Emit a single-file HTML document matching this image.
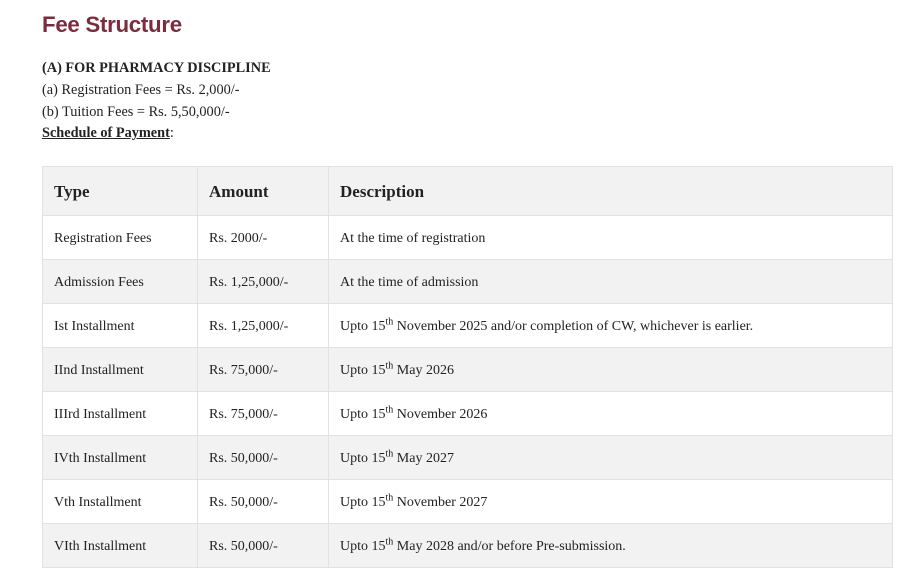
<!DOCTYPE html>
<html><head><style>
body{margin:0;background:#fff;width:900px;height:557px;overflow:hidden;font-family:"Liberation Serif",serif;color:#222;}
h1{position:absolute;left:42px;top:12px;margin:0;font:600 22.3px "Liberation Sans",sans-serif;color:#7a2d3f;letter-spacing:-0.3px}
.p{position:absolute;left:42px;top:58px;font-size:14.3px;line-height:21.8px}
table{position:absolute;left:42px;top:166px;width:851px;border-collapse:collapse;font-size:14px}
td,th{border:1px solid #e2e2e2;text-align:left;padding:2px 11px 0;height:41px}
th{height:46px;font-size:17px;font-weight:bold;background:#f2f2f2}
tr:nth-child(odd) td{background:#f2f2f2}
sup{font-size:10px;line-height:0}
</style></head><body>
<h1>Fee Structure</h1>
<div class="p"><b>(A) FOR PHARMACY DISCIPLINE</b><br>(a) Registration Fees = Rs. 2,000/-<br>(b) Tuition Fees = Rs. 5,50,000/-<br><b><u>Schedule of Payment</u></b>:</div>
<table>
<tr><th style="width:132px">Type</th><th style="width:108px">Amount</th><th>Description</th></tr>
<tr><td>Registration Fees</td><td>Rs. 2000/-</td><td>At the time of registration</td></tr>
<tr><td>Admission Fees</td><td>Rs. 1,25,000/-</td><td>At the time of admission</td></tr>
<tr><td>Ist Installment</td><td>Rs. 1,25,000/-</td><td>Upto 15<sup>th</sup> November 2025 and/or completion of CW, whichever is earlier.</td></tr>
<tr><td>IInd Installment</td><td>Rs. 75,000/-</td><td>Upto 15<sup>th</sup> May 2026</td></tr>
<tr><td>IIIrd Installment</td><td>Rs. 75,000/-</td><td>Upto 15<sup>th</sup> November 2026</td></tr>
<tr><td>IVth Installment</td><td>Rs. 50,000/-</td><td>Upto 15<sup>th</sup> May 2027</td></tr>
<tr><td>Vth Installment</td><td>Rs. 50,000/-</td><td>Upto 15<sup>th</sup> November 2027</td></tr>
<tr><td>VIth Installment</td><td>Rs. 50,000/-</td><td>Upto 15<sup>th</sup> May 2028 and/or before Pre-submission.</td></tr>
</table>
</body></html>
